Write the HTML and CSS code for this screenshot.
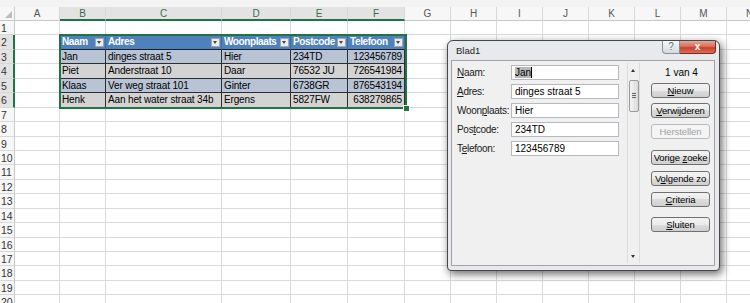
FILE: index.html
```html
<!DOCTYPE html>
<html lang="nl">
  <head>
    <meta charset="UTF-8" />
    <title>Blad1 - gegevensformulier</title>
    <link rel="stylesheet" href="styles.css">
  </head>
  <body>
    <div class="topStrip"></div>
    <div class="sheet" id="sheet">
      <!-- Cellen worden hieronder door het script gevuld -->
    </div>
    <div class="selection"><span class="handle"></span></div>

    <div class="dialog">
      <div class="titleBar">
        <span class="title">Blad1</span>
        <div class="winButtons">
          <span class="helpBtn">?</span>
          <span class="closeBtn">x</span>
        </div>
      </div>
      <div class="client">
        <div class="fields">
          <div class="field">
            <label><u>N</u>aam:</label>
            <span class="input"><span class="selText">Jan</span><span class="caret"></span></span>
          </div>
          <div class="field">
            <label><u>A</u>dres:</label>
            <span class="input">dinges straat 5</span>
          </div>
          <div class="field">
            <label>Woon<u>p</u>laats:</label>
            <span class="input">Hier</span>
          </div>
          <div class="field">
            <label>Pos<u>t</u>code:</label>
            <span class="input">234TD</span>
          </div>
          <div class="field">
            <label>T<u>e</u>lefoon:</label>
            <span class="input">123456789</span>
          </div>
        </div>
        <div class="scrollbar">
          <span class="arrow up"></span>
          <span class="thumb"></span>
          <span class="track"></span>
          <span class="arrow down"></span>
        </div>
        <div class="actions">
          <div class="counter">1 van 4</div>
          <button class="btn first"><u>N</u>ieuw</button>
          <button class="btn tight"><u>V</u>erwijderen</button>
          <button class="btn disabled">Herstellen</button>
          <button class="btn spaced">Vorige <u>z</u>oeke</button>
          <button class="btn">V<u>o</u>lgende zo</button>
          <button class="btn"><u>C</u>riteria</button>
          <button class="btn last"><u>S</u>luiten</button>
        </div>
      </div>
    </div>

    <script>
      const letters = ["A", "B", "C", "D", "E", "F", "G", "H", "I", "J", "K", "L", "M", "N"];
      const data = [
        ["Naam", "Adres", "Woonplaats", "Postcode", "Telefoon"],
        ["Jan", "dinges straat 5", "Hier", "234TD", "123456789"],
        ["Piet", "Anderstraat 10", "Daar", "76532 JU", "726541984"],
        ["Klaas", "Ver weg straat 101", "Ginter", "6738GR", "876543194"],
        ["Henk", "Aan het water straat 34b", "Ergens", "5827FW", "638279865"],
      ];
      const sheet = document.getElementById("sheet");

      function addCell(cls, text) {
        const div = document.createElement("div");
        div.className = cls;
        if (text !== undefined) div.textContent = text;
        sheet.appendChild(div);
        return div;
      }

      addCell("corner");
      letters.forEach((l, i) => addCell(i >= 1 && i <= 5 ? "colHead selHead" : "colHead", l));

      for (let r = 1; r <= 20; r++) {
        const inTable = r >= 2 && r <= 6;
        addCell(inTable ? "rowHead selRow" : "rowHead", r);
        letters.forEach((l, c) => {
          if (!inTable || c < 1 || c > 5) {
            addCell("cell");
            return;
          }
          const text = data[r - 2][c - 1];
          if (r === 2) {
            const cell = addCell("cell tblHead");
            const label = document.createElement("span");
            label.className = "headText";
            label.textContent = text;
            const filter = document.createElement("span");
            filter.className = "filter";
            cell.appendChild(label);
            cell.appendChild(filter);
          } else {
            addCell("cell " + (r % 2 ? "tblBlue" : "tblGray") + (c === 5 ? " num" : ""), text);
          }
        });
      }
    </script>
  </body>
</html>
```

FILE: styles.css
```css
* {
  box-sizing: border-box;
}

body {
  margin: 0;
  width: 750px;
  height: 303px;
  overflow: hidden;
  position: relative;
  background: #ffffff;
  font-family: "Liberation Sans", Arial, sans-serif;
}

.topStrip {
  height: 7px;
  background: #f3f3f3;
}

/* Werkblad */
.sheet {
  display: grid;
  grid-template-columns: 15px 45px 46px 116px 69px 57px 57px repeat(8, 46px);
  grid-template-rows: 14px repeat(20, 14.45px);
  font-size: 10px;
  letter-spacing: -0.15px;
}

.corner {
  position: relative;
  background: #f7f7f7;
  border-right: 1px solid #c8c8c8;
  border-bottom: 1px solid #c8c8c8;
}

.corner::after {
  content: "";
  position: absolute;
  right: 2px;
  bottom: 2px;
  border-left: 7px solid transparent;
  border-bottom: 7px solid #bcbcbc;
}

.colHead {
  background: #f7f7f7;
  border-right: 1px solid #d8d8d8;
  border-bottom: 1px solid #c8c8c8;
  color: #555555;
  font-size: 10px;
  letter-spacing: 0;
  line-height: 13px;
  text-align: center;
}

.selHead {
  background: #e3e3e3;
  color: #3d6b4e;
  border-bottom: 2px solid #217346;
}

.rowHead {
  background: #f7f7f7;
  border-right: 1px solid #c8c8c8;
  border-bottom: 1px solid #d8d8d8;
  color: #333333;
  font-size: 10.5px;
  letter-spacing: 0;
  line-height: 14px;
  padding-left: 1px;
}

.selRow {
  background: #e3e3e3;
  border-right: 2px solid #217346;
}

.cell {
  border-right: 1px solid #dadada;
  border-bottom: 1px solid #dadada;
  line-height: 14px;
  padding: 0 2px;
  white-space: nowrap;
  overflow: hidden;
  color: #000000;
}

.tblHead {
  display: flex;
  align-items: center;
  background: #4f81bd;
  color: #ffffff;
  font-weight: bold;
  letter-spacing: -0.4px;
  border-right-color: #41699a;
  border-bottom-color: #1f1f1f;
  padding-right: 1px;
}

.headText {
  flex: 1;
  min-width: 0;
  overflow: hidden;
}

.filter {
  position: relative;
  flex: none;
  width: 9px;
  height: 9px;
  background: #ececec;
  border: 1px solid #9aa6b8;
}

.filter::after {
  content: "";
  position: absolute;
  left: 1px;
  top: 2px;
  border-left: 2.5px solid transparent;
  border-right: 2.5px solid transparent;
  border-top: 3px solid #444444;
}

.tblBlue {
  background: #b8c4d6;
  border-color: #2e2e2e;
}

.tblGray {
  background: #d3d3d3;
  border-color: #2e2e2e;
}

.num {
  text-align: right;
}

/* Selectie B2:F6 */
.selection {
  position: absolute;
  left: 59px;
  top: 34px;
  width: 348px;
  height: 75px;
  border: 2px solid #217346;
}

.handle {
  position: absolute;
  right: -5px;
  bottom: -5px;
  width: 7px;
  height: 7px;
  background: #217346;
  border: 1px solid #ffffff;
}

/* Gegevensformulier */
.dialog {
  position: absolute;
  left: 447px;
  top: 40px;
  width: 273px;
  height: 231px;
  display: flex;
  flex-direction: column;
  background: #e7e9ec;
  border: 1px solid #474747;
  border-radius: 6px 6px 4px 4px;
  box-shadow: 2px 3px 9px rgba(0, 0, 0, 0.6);
  font-size: 10px;
  color: #000000;
}

.titleBar {
  height: 19px;
  display: flex;
  justify-content: space-between;
  align-items: flex-start;
  padding-left: 8px;
}

.title {
  font-size: 9.5px;
  line-height: 19px;
  color: #1e1e1e;
}

.winButtons {
  display: flex;
  margin-right: 3px;
}

.helpBtn,
.closeBtn {
  height: 13px;
  line-height: 12px;
  text-align: center;
}

.helpBtn {
  width: 18px;
  background: linear-gradient(#f6f7f9, #d5d9df);
  border: 1px solid #8a8f96;
  border-top: none;
  border-radius: 0 0 0 4px;
  color: #6a6f78;
  font-size: 10px;
}

.closeBtn {
  width: 36px;
  background: linear-gradient(#eaa697, #d8654f 50%, #c5422b 55%, #d9705a);
  border: 1px solid #7e2a1d;
  border-top: none;
  border-left: none;
  border-radius: 0 0 4px 0;
  color: #ffffff;
  font-weight: bold;
  font-size: 10px;
}

.client {
  flex: 1;
  display: flex;
  margin: 0 4px 4px 3px;
  background: #f0f0f0;
  border: 1px solid #a3a3a3;
}

.fields {
  width: 175px;
  padding: 4px 0 0 5px;
}

.field {
  display: flex;
  height: 15px;
  margin-bottom: 4px;
}

label {
  width: 54px;
  line-height: 15px;
  letter-spacing: -0.3px;
  color: #1a1a1a;
}

.input {
  display: flex;
  align-items: center;
  width: 108px;
  height: 15px;
  padding-left: 3px;
  background: #ffffff;
  border: 1px solid #b5b8be;
  white-space: nowrap;
}

.selText {
  background: #b8b8b8;
  line-height: 11px;
}

.caret {
  width: 1px;
  height: 11px;
  background: #000000;
}

.scrollbar {
  width: 13px;
  display: flex;
  flex-direction: column;
  align-items: center;
  margin: 2px 0;
  border-left: 1px solid #dcdcdc;
  border-right: 1px solid #dcdcdc;
}

.arrow {
  position: relative;
  width: 11px;
  height: 14px;
}

.arrow::after {
  content: "";
  position: absolute;
  left: 3px;
  top: 6px;
  border-left: 2.5px solid transparent;
  border-right: 2.5px solid transparent;
}

.up::after {
  border-bottom: 3px solid #333333;
}

.down::after {
  border-top: 3px solid #333333;
}

.thumb {
  position: relative;
  width: 10px;
  height: 32px;
  margin-top: 3px;
  background: linear-gradient(90deg, #f5f5f5, #dadada);
  border: 1px solid #9a9a9a;
  border-radius: 2px;
}

.thumb::after {
  content: "";
  position: absolute;
  left: 2px;
  top: 12px;
  width: 4px;
  height: 5px;
  background: repeating-linear-gradient(#666666 0 1px, transparent 1px 2px);
}

.track {
  flex: 1;
}

.actions {
  display: flex;
  flex-direction: column;
  padding: 6px 0 0 11px;
}

.counter {
  width: 59px;
  height: 12px;
  line-height: 12px;
  text-align: center;
  padding-left: 2px;
}

.btn {
  width: 59px;
  height: 15px;
  margin-top: 6px;
  padding: 0;
  font-family: "Liberation Sans", Arial, sans-serif;
  font-size: 9.5px;
  letter-spacing: -0.1px;
  line-height: 13px;
  color: #000000;
  white-space: nowrap;
  overflow: hidden;
  background: linear-gradient(#f3f3f3, #ebebeb 50%, #dddddd 50%, #cfcfcf);
  border: 1px solid #707070;
  border-radius: 3px;
}

.btn.first {
  margin-top: 4px;
}

.btn.tight {
  margin-top: 5px;
}

.btn.spaced {
  margin-top: 11px;
}

.btn.last {
  margin-top: 10px;
}

.btn.disabled {
  background: #f4f4f4;
  border-color: #b8bcc0;
  color: #a3a3a3;
}
```
